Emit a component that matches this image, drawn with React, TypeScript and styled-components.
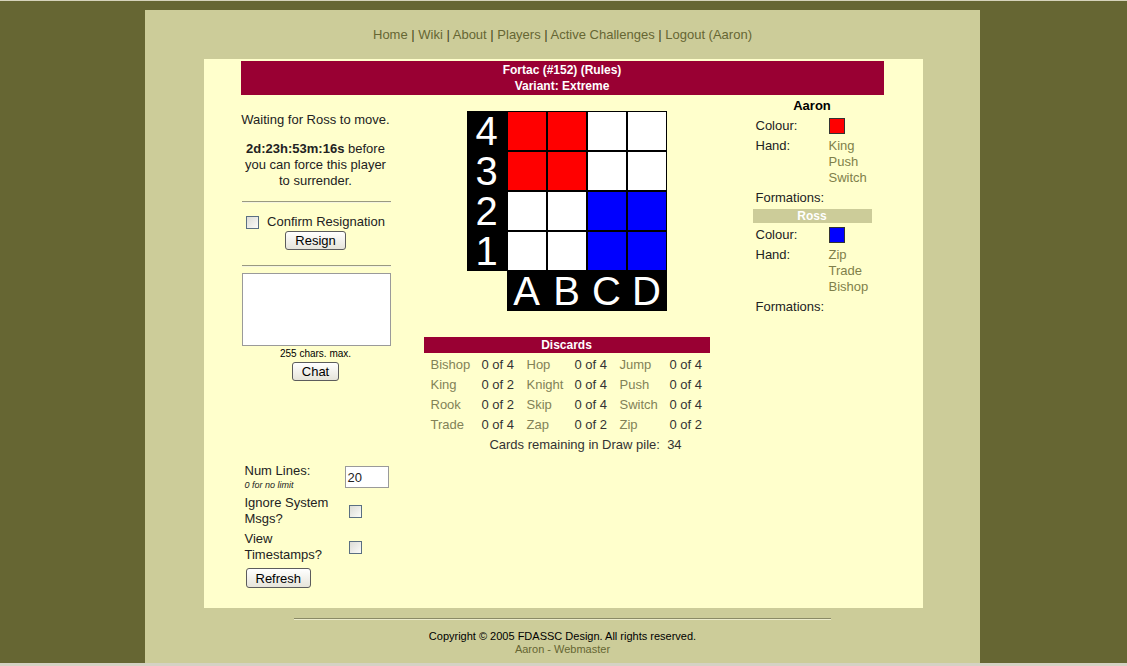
import styled, { createGlobalStyle } from "styled-components";

const GlobalStyle = createGlobalStyle`
  html, body {
    margin: 0;
    padding: 0;
    background: #666633;
  }
  body {
    font-family: "Liberation Sans", Arial, sans-serif;
    font-size: 13px;
    color: #222;
  }
`;

const Frame = styled.div`
  height: 666px;
  display: flex;
  flex-direction: column;
  align-items: center;
  overflow: hidden;
  border-top: 1px solid #d6d3bb;
  box-sizing: border-box;
`;

const Page = styled.div`
  margin-top: 9px;
  margin-right: 2px;
  width: 835px;
  height: 653px;
  background: #cccc99;
  display: flex;
  flex-direction: column;
  align-items: center;
`;

const BottomStrip = styled.div`
  align-self: stretch;
  height: 3px;
  background: #d4d2c4;
`;

const Nav = styled.div`
  height: 49px;
  box-sizing: border-box;
  padding-top: 17px;
  line-height: 16px;
  color: #444422;
`;

const NavLink = styled.a`
  color: #666633;
  text-decoration: none;
`;

const Inner = styled.div`
  width: 719px;
  height: 549px;
  margin-left: 1px;
  box-sizing: border-box;
  background: #ffffcc;
  padding: 2px 39px 0 37px;
`;

const TitleBar = styled.div`
  height: 34px;
  background: #990033;
  color: #fff;
  font-weight: bold;
  font-size: 12px;
  line-height: 16px;
  display: flex;
  flex-direction: column;
  align-items: center;
  justify-content: center;
`;

const Columns = styled.div`
  display: grid;
  grid-template-columns: 150px 352px 141px;
`;

const LeftCol = styled.div`
  display: flex;
  flex-direction: column;
`;

const Centered = styled.div<{ $top: number }>`
  margin-top: ${(p) => p.$top}px;
  text-align: center;
  line-height: 16px;
`;

const Rule = styled.div<{ $top: number }>`
  margin-top: ${(p) => p.$top}px;
  margin-left: 1px;
  height: 0;
  border-top: 1px solid #9a9a80;
  border-bottom: 1px solid #f4f4e0;
`;

const CheckRow = styled.div`
  margin-top: 11px;
  display: flex;
  align-items: center;
  justify-content: center;
  gap: 8px;
  line-height: 16px;
`;

const CheckBox = styled.span`
  display: inline-block;
  width: 11px;
  height: 11px;
  border: 1px solid #5a6f82;
  background: linear-gradient(135deg, #dcdcd6, #fbfbf8);
`;

const Button = styled.button<{ $tall?: boolean }>`
  height: ${(p) => (p.$tall ? 20 : 19)}px;
  padding: 0 9px;
  font-family: "Liberation Sans", Arial, sans-serif;
  font-size: 13px;
  line-height: 15px;
  color: #000;
  border: 1px solid #5c5c5c;
  border-radius: 3px;
  background: linear-gradient(#ffffff, #e6e4da);
`;

const ButtonRow = styled.div<{ $top: number; $align?: string; $indent?: number }>`
  margin-top: ${(p) => p.$top}px;
  padding-left: ${(p) => p.$indent || 0}px;
  display: flex;
  justify-content: ${(p) => p.$align || "center"};
`;

const ChatBox = styled.div`
  margin-top: 6px;
  margin-left: 1px;
  height: 73px;
  box-sizing: border-box;
  border: 1px solid #9a9a9a;
  background: #fff;
`;

const Small = styled.div`
  margin-top: 2px;
  text-align: center;
  font-size: 10px;
  line-height: 12px;
  color: #000;
`;

const Options = styled.div`
  margin-top: 82px;
  display: grid;
  grid-template-columns: 100px 50px;
  padding-left: 4px;
  line-height: 16px;
  row-gap: 4px;
`;

const OptionLabel = styled.div``;

const Hint = styled.div`
  font-size: 9px;
  line-height: 12px;
  font-style: italic;
`;

const OptionControl = styled.div`
  display: flex;
  align-items: center;
  padding-left: 4px;
`;

const NumInput = styled.div`
  width: 44px;
  height: 22px;
  box-sizing: border-box;
  border: 1px solid #9a9a9a;
  background: #fff;
  padding: 3px 0 0 2px;
  line-height: 15px;
  margin: 3px 0 0 -4px;
  align-self: flex-start;
`;

const MiddleCol = styled.div`
  display: flex;
  flex-direction: column;
  align-items: center;
`;

const Board = styled.div`
  margin-top: 16px;
  display: grid;
  grid-template-columns: repeat(5, 40px);
  grid-auto-rows: 40px;
`;

const fills: Record<string, string> = {
  red: "#ff0000",
  blue: "#0000ff",
  white: "#ffffff",
  label: "#000000",
  empty: "transparent",
};

const Cell = styled.div<{ $kind: string }>`
  box-sizing: border-box;
  background: ${(p) => fills[p.$kind]};
  border: ${(p) => (p.$kind === "empty" || p.$kind === "label" ? "none" : "1px solid #000")};
  color: #fff;
  font-size: 40px;
  line-height: 40px;
  text-align: center;
`;

const Discards = styled.div`
  margin-top: 26px;
  width: 286px;
`;

const DiscardBar = styled.div`
  height: 16px;
  line-height: 16px;
  background: #990033;
  color: #fff;
  font-weight: bold;
  font-size: 12px;
  text-align: center;
`;

const DiscardGrid = styled.div`
  margin-top: 2px;
  display: grid;
  grid-template-columns: 51px 45px 48px 45px 50px 40px;
  padding-left: 7px;
  grid-auto-rows: 20px;
  line-height: 20px;
`;

const CardName = styled.div`
  color: #828257;
`;

const CardCount = styled.div`
  color: #333;
`;

const DrawPile = styled.div`
  padding-left: 38px;
  text-align: center;
  line-height: 20px;
  color: #333;
`;

const RightCol = styled.div`
  padding: 3px 12px 0 10px;
`;

const PlayerName = styled.div`
  text-align: center;
  font-weight: bold;
  line-height: 16px;
  margin-bottom: 2px;
  color: #000;
`;

const PlayerBar = styled.div`
  margin: 1px 0 2px;
  height: 14px;
  line-height: 14px;
  background: #cccc99;
  color: #fff;
  font-weight: bold;
  font-size: 12px;
  text-align: center;
`;

const InfoRow = styled.div`
  display: grid;
  grid-template-columns: 76px 1fr;
  padding: 2px 0 2px 3px;
  line-height: 16px;
`;

const InfoValue = styled.div`
  color: #7f7f4a;
  margin-left: -3px;
`;

const Swatch = styled.div<{ $color: string }>`
  width: 16px;
  height: 16px;
  box-sizing: border-box;
  margin-left: -3px;
  border: 1px solid #333;
  background: ${(p) => p.$color};
`;

const FooterRule = styled.div`
  margin-top: 10px;
  width: 537px;
  border-top: 1px solid #8a8a66;
  border-bottom: 1px solid #ececcc;
`;

const Copyright = styled.div`
  margin-top: 10px;
  font-size: 11px;
  line-height: 13px;
  color: #000;
`;

const Webmaster = styled.div`
  font-size: 11px;
  line-height: 13px;
  color: #666633;
`;

const navItems = ["Home", "Wiki", "About", "Players", "Active Challenges", "Logout (Aaron)"];

const boardRows: string[][] = [
  ["4", "red", "red", "white", "white"],
  ["3", "red", "red", "white", "white"],
  ["2", "white", "white", "blue", "blue"],
  ["1", "white", "white", "blue", "blue"],
];

const discards: [string, string][] = [
  ["Bishop", "0 of 4"], ["Hop", "0 of 4"], ["Jump", "0 of 4"],
  ["King", "0 of 2"], ["Knight", "0 of 4"], ["Push", "0 of 4"],
  ["Rook", "0 of 2"], ["Skip", "0 of 4"], ["Switch", "0 of 4"],
  ["Trade", "0 of 4"], ["Zap", "0 of 2"], ["Zip", "0 of 2"],
];

type Player = { name: string; colour: string; hand: string[] };

const players: Player[] = [
  { name: "Aaron", colour: "#ff0000", hand: ["King", "Push", "Switch"] },
  { name: "Ross", colour: "#0000ff", hand: ["Zip", "Trade", "Bishop"] },
];

const PlayerInfo = ({ player }: { player: Player }) => (
  <>
    <InfoRow>
      <div>Colour:</div>
      <Swatch $color={player.colour} />
    </InfoRow>
    <InfoRow>
      <div>Hand:</div>
      <InfoValue>
        {player.hand.map((c) => (
          <div key={c}>{c}</div>
        ))}
      </InfoValue>
    </InfoRow>
    <InfoRow>
      <div>Formations:</div>
      <div />
    </InfoRow>
  </>
);

export default function App() {
  return (
    <>
      <GlobalStyle />
      <Frame>
        <Page>
          <Nav>
            {navItems.map((n, i) => (
              <span key={n}>
                {i > 0 && " | "}
                <NavLink href="#">{n}</NavLink>
              </span>
            ))}
          </Nav>
          <Inner>
            <TitleBar>
              <div>Fortac (#152) (Rules)</div>
              <div>Variant: Extreme</div>
            </TitleBar>
            <Columns>
              <LeftCol>
                <Centered $top={17}>Waiting for Ross to move.</Centered>
                <Centered $top={13}>
                  <b>2d:23h:53m:16s</b> before
                  <br />
                  you can force this player
                  <br />
                  to surrender.
                </Centered>
                <Rule $top={12} />
                <CheckRow>
                  <CheckBox />
                  <span>Confirm Resignation</span>
                </CheckRow>
                <ButtonRow $top={1}>
                  <Button>Resign</Button>
                </ButtonRow>
                <Rule $top={15} />
                <ChatBox />
                <Small>255 chars. max.</Small>
                <ButtonRow $top={2}>
                  <Button>Chat</Button>
                </ButtonRow>
                <Options>
                  <OptionLabel>
                    Num Lines:
                    <Hint>0 for no limit</Hint>
                  </OptionLabel>
                  <OptionControl>
                    <NumInput>20</NumInput>
                  </OptionControl>
                  <OptionLabel>Ignore System Msgs?</OptionLabel>
                  <OptionControl>
                    <CheckBox />
                  </OptionControl>
                  <OptionLabel>View Timestamps?</OptionLabel>
                  <OptionControl>
                    <CheckBox />
                  </OptionControl>
                </Options>
                <ButtonRow $top={5} $align="flex-start" $indent={5}>
                  <Button $tall>Refresh</Button>
                </ButtonRow>
              </LeftCol>

              <MiddleCol>
                <Board>
                  {boardRows.map((row) =>
                    row.map((v, i) =>
                      i === 0 ? (
                        <Cell key={row[0] + i} $kind="label">{v}</Cell>
                      ) : (
                        <Cell key={row[0] + i} $kind={v} />
                      )
                    )
                  )}
                  <Cell $kind="empty" />
                  {["A", "B", "C", "D"].map((l) => (
                    <Cell key={l} $kind="label">{l}</Cell>
                  ))}
                </Board>
                <Discards>
                  <DiscardBar>Discards</DiscardBar>
                  <DiscardGrid>
                    {discards.flatMap(([name, count]) => [
                      <CardName key={name}>{name}</CardName>,
                      <CardCount key={name + "c"}>{count}</CardCount>,
                    ])}
                  </DiscardGrid>
                  <DrawPile>Cards remaining in Draw pile:&nbsp;&nbsp;34</DrawPile>
                </Discards>
              </MiddleCol>

              <RightCol>
                <PlayerName>{players[0].name}</PlayerName>
                <PlayerInfo player={players[0]} />
                <PlayerBar>{players[1].name}</PlayerBar>
                <PlayerInfo player={players[1]} />
              </RightCol>
            </Columns>
          </Inner>
          <FooterRule />
          <Copyright>Copyright © 2005 FDASSC Design. All rights reserved.</Copyright>
          <Webmaster>Aaron - Webmaster</Webmaster>
        </Page>
        <BottomStrip />
      </Frame>
    </>
  );
}
